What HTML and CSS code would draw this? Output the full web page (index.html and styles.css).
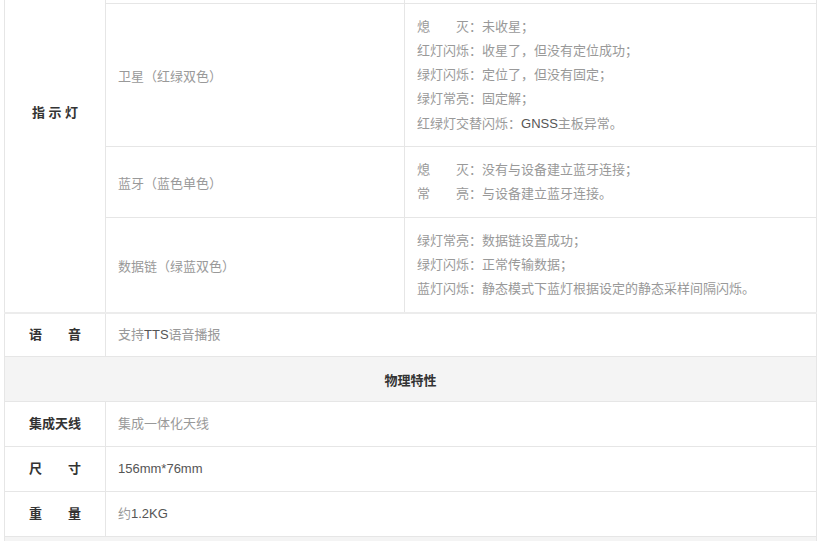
FILE: index.html
```html
<!DOCTYPE html>
<html lang="zh-CN">
<head>
<meta charset="utf-8">
<title>参数表</title>
<link rel="stylesheet" href="styles.css">
</head>
<body>
<div class="viewport">
<table class="spec">
  <colgroup>
    <col class="c-label">
    <col class="c-item">
    <col class="c-desc">
  </colgroup>
  <tbody>
    <tr class="prev-row">
      <td class="label" rowspan="4">指 示 灯</td>
      <td class="item"></td>
      <td class="blank"></td>
    </tr>
    <tr>
      <td class="item">卫星（红绿双色）</td>
      <td class="desc">
        <div>熄　　灭：未收星；</div>
        <div>红灯闪烁：收星了，但没有定位成功；</div>
        <div>绿灯闪烁：定位了，但没有固定；</div>
        <div>绿灯常亮：固定解；</div>
        <div>红绿灯交替闪烁：<span class="en">GNSS</span>主板异常。</div>
      </td>
    </tr>
    <tr>
      <td class="item">蓝牙（蓝色单色）</td>
      <td class="desc">
        <div>熄　　灭：没有与设备建立蓝牙连接；</div>
        <div>常　　亮：与设备建立蓝牙连接。</div>
      </td>
    </tr>
    <tr>
      <td class="item">数据链（绿蓝双色）</td>
      <td class="desc">
        <div>绿灯常亮：数据链设置成功；</div>
        <div>绿灯闪烁：正常传输数据；</div>
        <div>蓝灯闪烁：静态模式下蓝灯根据设定的静态采样间隔闪烁。</div>
      </td>
    </tr>
    <tr class="simple first-simple">
      <td class="label">语　　音</td>
      <td class="value" colspan="2">支持<span class="en">TTS</span>语音播报</td>
    </tr>
    <tr class="section">
      <td colspan="3">物理特性</td>
    </tr>
    <tr class="simple">
      <td class="label">集成天线</td>
      <td class="value" colspan="2">集成一体化天线</td>
    </tr>
    <tr class="simple">
      <td class="label">尺　　寸</td>
      <td class="value" colspan="2"><span class="en">156mm*76mm</span></td>
    </tr>
    <tr class="simple">
      <td class="label">重　　量</td>
      <td class="value" colspan="2">约<span class="en">1.2KG</span></td>
    </tr>
    <tr class="section last">
      <td colspan="3"></td>
    </tr>
  </tbody>
</table>
</div>
</body>
</html>
```

FILE: styles.css
```css
html, body {
  margin: 0;
  padding: 0;
  background: #ffffff;
}

body {
  font-family: "Liberation Sans", "Noto Sans CJK SC", sans-serif;
  font-size: 13px;
  color: #888888;
}

.viewport {
  width: 820px;
  height: 541px;
  overflow: hidden;
}

.spec {
  border-collapse: collapse;
  width: 812px;
  margin: -89px 0 0 4px;
  table-layout: fixed;
}

.c-label { width: 101px; }
.c-item { width: 299px; }
.c-desc { width: 412px; }

.spec td {
  border: 1px solid #e6e6e6;
  vertical-align: middle;
  padding: 0 12px;
}

.prev-row td {
  height: 91px;
}

.label {
  text-align: center;
  color: #333333;
  font-weight: bold;
  padding: 0 !important;
}

.item {
  color: #999999;
}

.desc {
  color: #999999;
  padding: 10.5px 12px !important;
  line-height: 24.3px;
}

.simple td {
  height: 45px;
  box-sizing: border-box;
  line-height: 18px;
}

.first-simple td {
  height: 44px;
  border-top: 2px solid #ececec;
}

.value {
  color: #999999;
}

.en {
  color: #555555;
}

.section td {
  height: 44px;
  background: #f4f4f4;
  text-align: center;
  color: #333333;
  font-weight: bold;
}
```
